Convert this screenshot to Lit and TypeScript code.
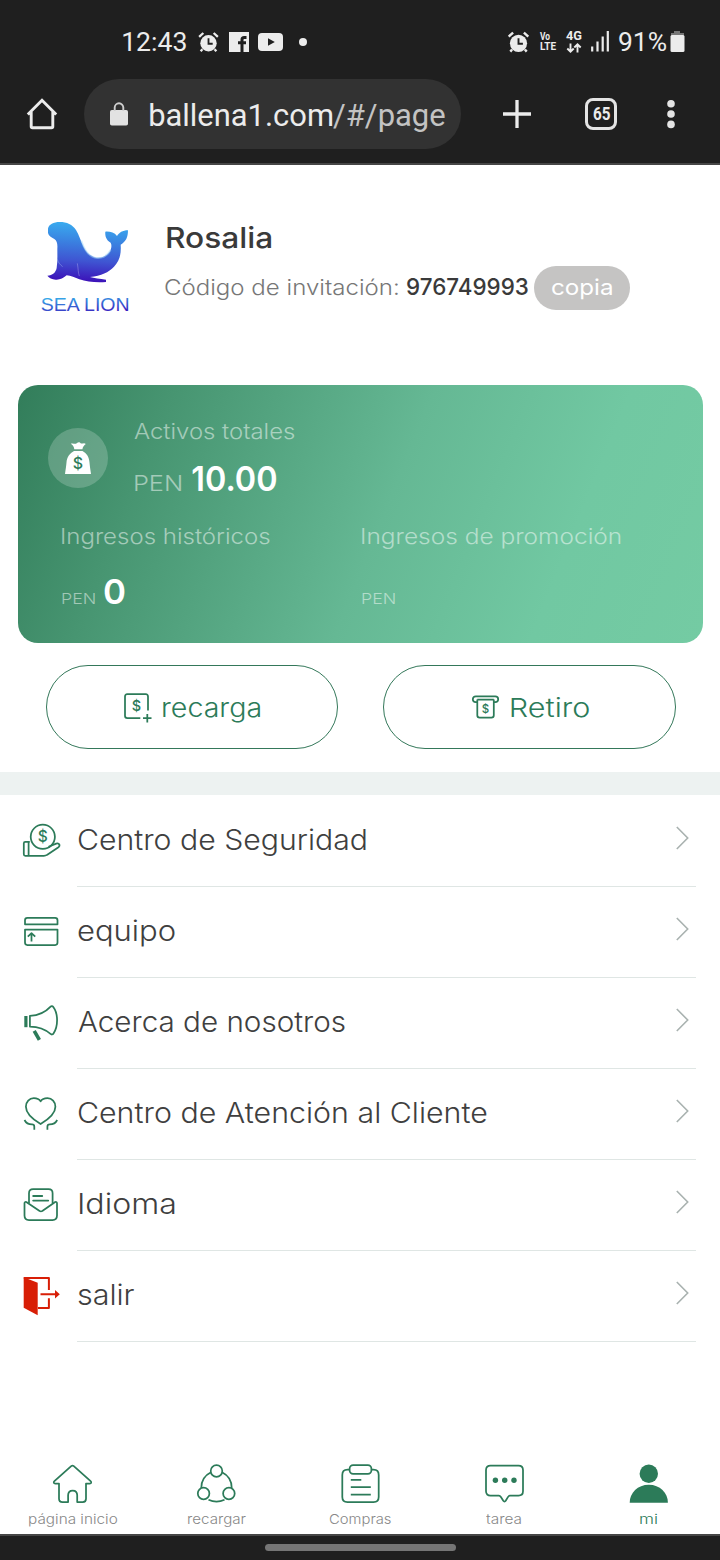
import { LitElement, html, svg, css } from "lit";
import { customElement, property } from "lit/decorators.js";

/** A single line of text whose visible ink spans exactly `w` pixels. */
@customElement("fit-text")
class FitText extends LitElement {
  @property({ type: Number }) w = 0;
  @property() text = "";

  static styles = css`
    :host {
      display: block;
      flex: none;
      white-space: nowrap;
    }
    .line {
      display: inline-block;
      vertical-align: top;
      transform-origin: 0 50%;
    }
  `;

  updated() {
    const line = this.renderRoot.querySelector(".line") as HTMLElement;
    const s = getComputedStyle(this);
    const ctx = document.createElement("canvas").getContext("2d")!;
    ctx.font = `${s.fontWeight} ${s.fontSize} ${s.fontFamily}`;
    const m = ctx.measureText(this.text);
    const ink = m.actualBoundingBoxLeft + m.actualBoundingBoxRight;
    const k = this.w / ink;
    const stem = /^[IPRbrpm1]/.test(this.text) ? 1.2 : 0;
    this.style.width = `${this.w}px`;
    line.style.transform = `translateX(${m.actualBoundingBoxLeft * k + stem}px) scaleX(${k})`;
  }

  render() {
    return html`<span class="line">${this.text}</span>`;
  }
}

const t = (text: string, w: number, cls = "") =>
  html`<fit-text class=${cls} .text=${text} .w=${w}></fit-text>`;

const alarm = svg`
  <circle cx="11" cy="12.3" r="8.6" fill="currentColor"/>
  <path d="M1.2 5.6 5.6 1.6M20.8 5.6 16.4 1.6M4.6 18.5 2.8 20.6M17.4 18.5l1.8 2.1" stroke="currentColor" stroke-width="2.4" fill="none"/>
  <path d="M11 7.2v5.6h4.4" stroke="#1f1f1f" stroke-width="1.9" fill="none"/>`;

const rowIcons = [
  svg`<circle cx="19.8" cy="13.8" r="12.1"/>
      <path d="M6.8 18.8H2.3c-.9 0-1.5.6-1.5 1.5v11c0 .9.6 1.5 1.5 1.5h4.5M5.6 18.8v14M6.6 32.8h14.2c1.4 0 2.3-.3 3.5-1l10.800-7.300c2.600-1.900 1.200-4.800-1.900-3.900l-7.700 3.200"/>
      <text x="19.800" y="19.300" font-size="15.500">$</text>`,
  svg`<path d="M2 10.300V6.200c0-1.600.9-2.400 2.400-2.400h27.700c1.600 0 2.400.8 2.400 2.400v4.100zM2 15.600h32.500v13c0 1.600-.8 2.400-2.400 2.400H4.400C2.900 31 2 30.200 2 28.600z"/>
      <path d="M8.500 27.500v-8.300M4.800 22.600l3.700-3.500 3.700 3.500"/>`,
  svg`<path d="M2.900 11v11.200" stroke-width="3.200"/>
      <path d="M6.900 10.800c8.300-.5 15.100-3.200 20.400-9 1-1 2.200-1 3 .1 5 6.700 5 19.400.2 26.600-.8 1.200-2 1.300-3 .4-5.900-5.200-12.500-7.200-20.600-7.300z"/>
      <path d="M11.200 25.800l5.200 9" stroke-width="3.600"/>`,
  svg`<path d="M17.600 28C9 22.800 2.900 17.500 2.900 10.700c0-4.900 3.500-8.500 7.900-8.500 2.900 0 5.300.7 6.800 3.200 1.500-2.500 4-3.200 6.900-3.200 4.400 0 7.900 3.600 7.900 8.500 0 6.800-6.200 12.100-14.800 17.300z"/>
      <path d="M1.500 24c1.500 3 4.300 4.400 7.500 4.400 1.500 0 2.300.8 2.300 2.300v3M34.200 24c-1.500 3-4.300 4.400-7.500 4.400-1.500 0-2.300.8-2.300 2.300v3"/>`,
  svg`<path d="M6 16.200V6.300c0-2.700 1.400-4.100 4.100-4.100h15.400c2.700 0 4.100 1.400 4.100 4.100v9.900"/>
      <path d="M3.300 15c-1.100-.3-1.800.2-1.800 1.300v12.200c0 3.100 1.400 4.500 4.500 4.500h23.500c3.100 0 4.500-1.400 4.500-4.500V16.300c0-1.100-.7-1.600-1.800-1.300L19.300 24c-.9.500-1.800.5-2.700 0z"/>
      <path d="M10.200 9h9M10.200 13.600h15" stroke-width="1.900" stroke-linecap="round"/>`,
  svg`<path d="M.7-.7 14.700 4.800v32.400L.7 29.700z" fill="#d81e06" stroke="none"/>
      <path d="M.8.100h25.100v12M25.900 20.200v9.700H15M17.500 16.200h15" stroke="#d81e06" stroke-width="2"/>
      <path d="M32 11.900 36.800 16.200 32 20.500z" fill="#d81e06" stroke="none"/>`,
];

const rows: Array<[string, number]> = [
  ["Centro de Seguridad", 288],
  ["equipo", 97.5],
  ["Acerca de nosotros", 266.5],
  ["Centro de Atención al Cliente", 408.5],
  ["Idioma", 96],
  ["salir", 56.5],
];

const tabs: Array<[string, number, unknown]> = [
  ["página inicio", 88.5, svg`<path d="M7 19.500H3.300c-1.700 0-2-1.300-.9-2.300L19.200 2.200c.9-.8 1.700-.8 2.600 0l16.800 15c1.100 1 .8 2.300-.9 2.300H34v15.200c0 2.200-1.100 3.300-3.300 3.300H25.200v-6.800c0-2.900-1.700-4.700-4.500-4.700s-4.600 1.800-4.600 4.700V38h-5.600C8.200 38 7 36.900 7 34.700z"/>`],
  ["recargar", 58, svg`<circle cx="20.500" cy="7" r="5.800"/><circle cx="7.600" cy="29.500" r="5.800"/><circle cx="32.900" cy="29.500" r="5.800"/>
    <path d="M15 8.300C9.500 11 5.300 16.500 5.300 24M26 8.300c5.500 2.700 9.700 8.200 9.700 15.700M12.500 35.700c5 2.400 11 2.400 16 0"/>`],
  ["Compras", 62.5, svg`<path d="M9.500 5.700H7.500c-3.400 0-5.200 1.800-5.200 5.200v22c0 3.400 1.800 5.100 5.200 5.100h26c3.400 0 5.200-1.700 5.200-5.100v-22c0-3.400-1.800-5.200-5.200-5.200h-2.200"/>
    <rect x="9.600" y="1.200" width="21.800" height="8.600" rx="3.500"/>
    <path d="M10.800 15.900h10.500M10.800 23.200h20M10.800 30.500h20"/>`],
  ["tarea", 35.5, svg`<path d="M6.500 1.500h28c2.800 0 4.500 1.700 4.500 4.500v21.300c0 2.800-1.700 4.300-4.500 4.300h-8.600c-1 0-1.500.7-2 1.500l-2.200 3.700c-.7 1-1.700 1-2.400 0l-2.400-3.700c-.5-.8-1-1.500-2-1.500H6.500C3.700 31.600 2 30.100 2 27.300V6c0-2.800 1.700-4.500 4.500-4.500z"/>
    <g fill="#2c7b59" stroke="none"><circle cx="11.400" cy="16.300" r="2.700"/><circle cx="20.700" cy="16.300" r="2.700"/><circle cx="30" cy="16.300" r="2.700"/></g>`],
  ["mi", 17.5, svg`<g fill="#2c7b59" stroke="none"><circle cx="20.800" cy="9.700" r="9.200"/><path d="M1.700 38.700c0-10 8-18 19.100-18s19.100 8 19.100 18z"/></g>`],
];

@customElement("app-root")
class AppRoot extends LitElement {
  static styles = css`
    :host {
      display: flex;
      flex-direction: column;
      height: 1560px;
      background: #fff;
      font-family: Inter, "Noto Sans", sans-serif;
      color: #444;
      overflow: hidden;
    }
    svg { display: block; flex: none; overflow: visible; }

    .chrome {
      background: #1f1f1f;
      height: 163px;
      border-bottom: 2px solid #464646;
      font-family: Roboto, sans-serif;
      color: #ececec;
    }
    .status {
      display: flex;
      justify-content: space-between;
      height: 79px;
      padding: 0 35px 0 121.5px;
      box-sizing: border-box;
      align-items: center;
    }
    .status > div { display: flex; align-items: center; height: 30px; padding-top: 4px; }
    .clock { font-size: 26px; line-height: 30px; }
    .g1 { margin-left: 13.5px; }
    .g2 { margin-left: 10px; }
    .g3 { margin-left: 9.5px; }
    .g4 { margin-left: 16px; }
    .g5 { margin-left: 4px; }
    .bar { display: flex; align-items: center; height: 70px; }
    .bar .home { margin-left: 26px; }
    .url {
      display: flex;
      align-items: center;
      width: 377px;
      height: 70px;
      margin-left: 26px;
      padding-left: 26px;
      box-sizing: border-box;
      border-radius: 35px;
      background: #323232;
      font-size: 30.5px;
      line-height: 40px;
    }
    .host { margin: 4px 0 0 20.5px; }
    .path { margin: 4px 0 0 2.5px; color: #c3c3c3; }
    .plus { margin-left: 42px; }
    .count {
      display: flex;
      align-items: center;
      justify-content: center;
      width: 32px;
      height: 32px;
      margin-left: 54px;
      box-sizing: border-box;
      border: 3px solid #e4e4e4;
      border-radius: 8px;
      font-size: 18.5px;
      font-weight: 700;
      line-height: 20px;
    }
    .dots { margin-left: 50px; }

    .profile { display: flex; height: 220px; box-sizing: border-box; padding: 53px 0 0 40px; }
    .who { margin-left: 34px; }
    .name { font-size: 29px; font-weight: 500; line-height: 38px; color: #3a3a3a; margin: 1px 0 0 1px; }
    .code { display: flex; align-items: center; height: 44px; margin-top: 9px; font-size: 22px; line-height: 30px; }
    .label { font-weight: 300; color: #777; margin-top: -2px; }
    .num { font-size: 23px; font-weight: 500; color: #3a3a3a; margin: -2px 0 0 8px; }
    .copy {
      display: flex;
      align-items: center;
      justify-content: center;
      width: 96px;
      height: 44px;
      margin-left: 6px;
      border-radius: 22px;
      background: #c5c4c3;
      color: #fff;
      font-size: 22px;
    }
    .copy fit-text { margin-top: -2px; }

    .card {
      height: 258px;
      margin: 0 17px 0 18px;
      box-sizing: border-box;
      padding: 31px 0 0 30px;
      border-radius: 20px;
      background: linear-gradient(112deg, #327d5a 0%, #479571 20%, #65b894 53%, #71c8a2 78%, #74cba3 100%);
      color: rgba(255, 255, 255, 0.5);
      font-size: 22px;
      font-weight: 300;
      line-height: 30px;
    }
    .total { display: flex; height: 105px; }
    .bag { width: 60px; height: 60px; margin-top: 12px; border-radius: 50%; background: rgba(255, 255, 255, 0.2); }
    .sums { margin-left: 26px; }
    .money { display: flex; align-items: center; height: 34px; margin-top: 16px; }
    .money .cur { margin-top: 8px; }
    .big { font-size: 34px; font-weight: 600; line-height: 34px; color: #fff; margin-left: 10.5px; }
    .split { display: grid; grid-template-columns: 300px 1fr; padding-left: 13px; }
    .split .money { margin-top: 24px; }
    .split .small { font-size: 15px; line-height: 20px; margin-top: 13px; }

    .actions { display: flex; gap: 45px; height: 129px; box-sizing: border-box; padding: 22px 44px 0 46px; color: #2c7b59; }
    .pill {
      display: flex;
      flex: 1;
      align-items: center;
      justify-content: center;
      height: 84px;
      box-sizing: border-box;
      border: 1px solid #34785a;
      border-radius: 42px;
      font-size: 26px;
      font-weight: 300;
      line-height: 36px;
    }
    .pill:first-child { flex: 0 0 292px; }
    .pill fit-text { margin: 1px 0 0 11px; }
    .strip { height: 23px; background: #edf2f1; }

    .list { height: 660px; padding: 1px 24px 0 23px; box-sizing: border-box; }
    .row { display: flex; height: 91px; }
    .row .ico { margin-top: 27px; }
    .cell {
      display: flex;
      flex: 1;
      align-items: center;
      justify-content: space-between;
      margin-left: 17px;
      padding: 0 7px 3px 1px;
      border-bottom: 1px solid #dfe6e4;
      font-size: 28px;
      font-weight: 300;
      line-height: 40px;
      color: #3f3f3f;
    }
    .chev { margin-bottom: 3px; }
    .tabs { display: grid; grid-template-columns: repeat(5, 144px); height: 79px; box-sizing: border-box; padding-top: 9px; }
    .tab { display: flex; flex-direction: column; align-items: center; font-size: 13.5px; font-weight: 300; color: #888; line-height: 18px; }
    .tab fit-text { margin-top: 6px; }
    .tab:last-child { color: #2c7b59; }
    .line { fill: none; stroke: #2c7b59; stroke-width: 1.75; stroke-linejoin: round; }
    .line text, .dollar { fill: #2c7b59; stroke: none; text-anchor: middle; font-family: Inter, sans-serif; font-weight: 500; }
    .foot { display: flex; justify-content: center; height: 26px; box-sizing: border-box; border-top: 2px solid #464646; padding-top: 8px; background: #1f1f1f; }
    .handle { width: 191px; height: 7px; border-radius: 4px; background: #757575; }
  `;

  private chrome() {
    return html`<div class="chrome">
      <div class="status">
        <div>
          ${t("12:43", 62.5, "clock")}
          <svg class="g1" width="21" height="22" viewBox="0 0 22 22">${alarm}</svg>
          <svg class="g2" width="20" height="20" viewBox="0 0 20 20"><rect width="20" height="20" fill="#ececec"/>
            <path d="M13 20V7.800c0-1.500.8-2.200 2.200-2.200h2.300M9 10.800h8" fill="none" stroke="#1f1f1f" stroke-width="3"/></svg>
          <svg class="g3" width="25" height="18" viewBox="0 0 25 18"><rect width="25" height="18" rx="4" fill="#ececec"/><path d="M10 5.200v7.600L16.800 9z" fill="#1f1f1f"/></svg>
          <svg class="g4" width="8" height="8" viewBox="0 0 8 8"><circle cx="4" cy="4" r="4" fill="#ececec"/></svg>
        </div>
        <div>
          <svg width="23" height="22" viewBox="0 0 22 22">${alarm}</svg>
          <svg class="g2" width="16" height="20" viewBox="0 0 16 20" fill="#ececec" font-family="Roboto" font-weight="700">
            <text x="0" y="8" font-size="10" textLength="10" lengthAdjust="spacingAndGlyphs">Vo</text>
            <text x="0" y="17.500" font-size="11" textLength="16" lengthAdjust="spacingAndGlyphs">LTE</text></svg>
          <svg class="g3" width="16" height="22" viewBox="0 0 16 22" fill="#ececec" font-family="Roboto" font-weight="700">
            <text x="0" y="9.200" font-size="13" textLength="16" lengthAdjust="spacingAndGlyphs">4G</text>
            <path d="M4.500 12.500v8M1.300 17.500l3.200 3.200 3.200-3.200M11.500 21.500v-8M8.300 16.500l3.200-3.200 3.200 3.200" fill="none" stroke="#ececec" stroke-width="1.900"/></svg>
          <svg class="g3" width="18" height="21" viewBox="0 0 18 21"><path d="M1.200 20.500v-5M6.500 20.500v-10M11.700 20.500v-15M16.800 20.500V0" stroke="#ececec" stroke-width="2.200" fill="none"/></svg>
          ${t("91%", 47, "clock g2")}
          <svg class="g5" width="15" height="22" viewBox="0 0 15 22"><path d="M4 0h6v2h4v3H1V2h3z" fill="#777"/><rect x="0.500" y="4" width="14" height="17" rx="1.500" fill="#ececec"/></svg>
        </div>
      </div>
      <div class="bar">
        <svg class="home" width="32" height="32" viewBox="0 0 32 32"><path d="M1.800 16.500 16 2.200l14.200 14.300M5.200 14v14.500c0 .8.500 1.300 1.300 1.300h19c.8 0 1.300-.5 1.300-1.300V14" fill="none" stroke="#ececec" stroke-width="2.900"/></svg>
        <div class="url">
          <svg width="18" height="24" viewBox="0 0 18 24"><rect y="8" width="18" height="15.500" rx="1.800" fill="#e2e2e2"/><path d="M4.700 9V5.600a4.300 4.300 0 0 1 8.600 0V9" fill="none" stroke="#cfcfcf" stroke-width="1.900"/></svg>
          ${t("ballena1.com", 182, "host")}${t("/#/page", 112.5, "path")}
        </div>
        <svg class="plus" width="28" height="28" viewBox="0 0 28 28"><path d="M14 0v28M0 14h28" stroke="#ececec" stroke-width="3.300"/></svg>
        <div class="count">${t("65", 17)}</div>
        <svg class="dots" width="8" height="28" viewBox="0 0 8 28"><g fill="#e4e4e4"><circle cx="4" cy="3.700" r="3.800"/><circle cx="4" cy="14" r="3.800"/><circle cx="4" cy="24.400" r="3.800"/></g></svg>
      </div>
    </div>`;
  }

  private logo() {
    return html`<svg width="91" height="100" viewBox="60 54 273 300">
      <defs>
        <linearGradient id="skin" gradientUnits="userSpaceOnUse" x1="190" y1="66" x2="180" y2="245">
          <stop offset="0" stop-color="#39aef0"/><stop offset=".3" stop-color="#3a86e2"/><stop offset=".65" stop-color="#3f55d2"/><stop offset="1" stop-color="#3c10b8"/>
        </linearGradient>
        <linearGradient id="word" gradientUnits="userSpaceOnUse" x1="193" y1="288" x2="197" y2="340">
          <stop offset="0" stop-color="#35a8e8"/><stop offset="1" stop-color="#3a22c0"/>
        </linearGradient>
      </defs>
      <path fill="url(#skin)" d="M84 86C86 73 101 66 119 66c22 0 38 8 49 24 9 14 14 34 23 51 9 18 22 29 38 32 19 3 36-8 43-24 3-8 3-15 0-21-9-4-18-15-16-33 13-1 27 2 35 13 6-10 17-17 33-17 0 21-6 34-22 43 2 28-3 49-20 66-16 17-38 27-72 31 12 3 30 6 48 8v7c-32 2-58-1-80-8-12-4-26-12-38-12-10 9-21 14-33 13-11-1-20-5-25-12 16-1 25-9 28-23 3-20 2-40 2-58 1-15-1-24-9-29-9-6-17-9-19-18z"/>
      <path d="M172 190c3 16 2 28 6 38" fill="none" stroke="#b9b2f0" stroke-opacity=".6" stroke-width="2"/>
      <path d="M112 178c3 10 8 16 16 22" fill="none" stroke="#a9c2f5" stroke-opacity=".6" stroke-width="2"/>
      <path d="M184 122c10 30 22 49 45 52 20 2 34-8 43-24" fill="none" stroke="#a8daf7" stroke-opacity=".5" stroke-width="5"/>
      <text x="62" y="334" font-family="Liberation Sans" font-size="57" textLength="267" lengthAdjust="spacingAndGlyphs" fill="url(#word)">SEA LION</text>
    </svg>`;
  }

  render() {
    return html`${this.chrome()}
      <div class="profile">
        ${this.logo()}
        <div class="who">
          ${t("Rosalia", 104.5, "name")}
          <div class="code">
            ${t("Código de invitación:", 233.5, "label")}${t("976749993", 121.5, "num")}
            <div class="copy">${t("copia", 60)}</div>
          </div>
        </div>
      </div>
      <div class="card">
        <div class="total">
          <svg class="bag" viewBox="0 0 60 60"><g fill="#fff">
            <path d="M22.800 15.800c2.500-.8 3.900.5 5.200-.1 1.200-.6 2-1.900 3.300-1.400.9.400 1.400 1.400 2.500 1.300 1.400-.1 2.500-.8 4 .3-1.700 1.300-3 2.700-3.400 5.400h-8.100c-.2-2.700-1.600-4.200-3.500-5.500z"/>
            <path d="M26 23h8.500c4.200 2.400 6.600 6 7 11.500.3 3.500.8 6.500 1.500 11.500H17c.7-5 1.200-8 1.500-11.500.4-5.500 3.300-9.100 7.500-11.500z"/></g>
            <text class="dollar" x="29.800" y="41" font-size="16">$</text></svg>
          <div class="sums">
            ${t("Activos totales", 161)}
            <div class="money">${t("PEN", 46, "cur")}${t("10.00", 84, "big")}</div>
          </div>
        </div>
        <div class="split">
          <div>
            ${t("Ingresos históricos", 208)}
            <div class="money">${t("PEN", 32.5, "small")}${t("0", 20.5, "big")}</div>
          </div>
          <div>
            ${t("Ingresos de promoción", 259)}
            <div class="money">${t("PEN", 32.5, "small")}</div>
          </div>
        </div>
      </div>
      <div class="actions">
        <div class="pill">
          <svg class="line" width="27" height="29" viewBox="0 0 27 29"><path d="M24 17.500V3.500c0-1.500-.8-2.300-2.300-2.300H3.300C1.800 1.200 1 2 1 3.500v19.300c0 1.500.8 2.300 2.300 2.300h13M19 25.200h8.500M23.300 21v8.500"/><text x="12.500" y="18.300" font-size="14.500">$</text></svg>
          ${t("recarga", 97.5)}
        </div>
        <div class="pill">
          <svg class="line" width="27" height="24" viewBox="0 0 27 24"><path d="M5 7H3.800C2 7 .8 5.900.8 4.200S2 1.300 3.800 1.300h19.400c1.800 0 3 1.200 3 2.900S25 7 23.200 7H22M5.300 4.500v15.800c0 1.500.8 2.300 2.300 2.300h11.900c1.500 0 2.300-.8 2.300-2.300V4.500M5.300 4.500h16.500"/><text x="13.500" y="17.500" font-size="11.500">$</text></svg>
          ${t("Retiro", 77.5)}
        </div>
      </div>
      <div class="strip"></div>
      <div class="list">
        ${rows.map(
          ([label, w], i) => html`<div class="row">
            <svg class="ico line" width="37" height="38" viewBox="0 0 37 38">${rowIcons[i]}</svg>
            <div class="cell">${t(label, w)}
              <svg class="chev" width="13" height="24" viewBox="0 0 13 24"><path d="M.8 1 11.700 12 .8 23" fill="none" stroke="#a9b2b0" stroke-width="1.600"/></svg>
            </div>
          </div>`,
        )}
      </div>
      <div class="tabs">
        ${tabs.map(
          ([label, w, icon]) => html`<div class="tab">
            <svg class="line" width="41" height="40" viewBox="0 0 41 40">${icon}</svg>
            ${t(label, w)}
          </div>`,
        )}
      </div>
      <div class="foot"><div class="handle"></div></div>`;
  }
}
